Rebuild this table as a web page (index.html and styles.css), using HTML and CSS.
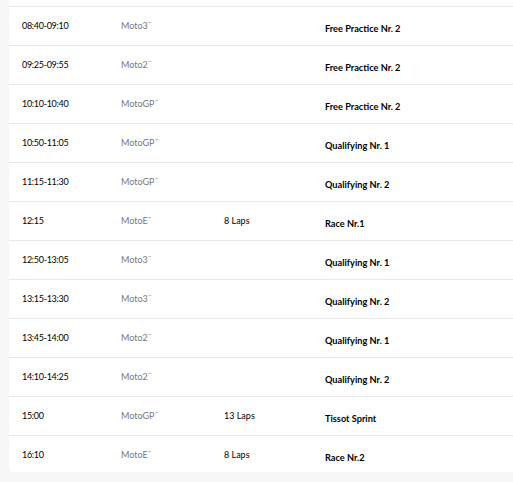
FILE: index.html
```html
<!DOCTYPE html>
<html>
<head>
<meta charset="utf-8">
<link rel="stylesheet" href="styles.css">
</head>
<body>
<div class="card">
  <div class="row"><div class="time">08:40-09:10</div><div class="cls">Moto3<sup>™</sup></div><div class="laps"></div><div class="event">Free Practice Nr. 2</div></div>
  <div class="row"><div class="time">09:25-09:55</div><div class="cls">Moto2<sup>™</sup></div><div class="laps"></div><div class="event">Free Practice Nr. 2</div></div>
  <div class="row"><div class="time">10:10-10:40</div><div class="cls">MotoGP<sup>™</sup></div><div class="laps"></div><div class="event">Free Practice Nr. 2</div></div>
  <div class="row"><div class="time">10:50-11:05</div><div class="cls">MotoGP<sup>™</sup></div><div class="laps"></div><div class="event">Qualifying Nr. 1</div></div>
  <div class="row"><div class="time">11:15-11:30</div><div class="cls">MotoGP<sup>™</sup></div><div class="laps"></div><div class="event">Qualifying Nr. 2</div></div>
  <div class="row"><div class="time">12:15</div><div class="cls">MotoE<sup>™</sup></div><div class="laps">8 Laps</div><div class="event">Race Nr.1</div></div>
  <div class="row"><div class="time">12:50-13:05</div><div class="cls">Moto3<sup>™</sup></div><div class="laps"></div><div class="event">Qualifying Nr. 1</div></div>
  <div class="row"><div class="time">13:15-13:30</div><div class="cls">Moto3<sup>™</sup></div><div class="laps"></div><div class="event">Qualifying Nr. 2</div></div>
  <div class="row"><div class="time">13:45-14:00</div><div class="cls">Moto2<sup>™</sup></div><div class="laps"></div><div class="event">Qualifying Nr. 1</div></div>
  <div class="row"><div class="time">14:10-14:25</div><div class="cls">Moto2<sup>™</sup></div><div class="laps"></div><div class="event">Qualifying Nr. 2</div></div>
  <div class="row"><div class="time">15:00</div><div class="cls">MotoGP<sup>™</sup></div><div class="laps">13 Laps</div><div class="event">Tissot Sprint</div></div>
  <div class="row last"><div class="time">16:10</div><div class="cls">MotoE<sup>™</sup></div><div class="laps">8 Laps</div><div class="event">Race Nr.2</div></div>
</div>
</body>
</html>
```
FILE: styles.css
```css
html, body {
  margin: 0;
  padding: 0;
  background: #f7f7f7;
  overflow: hidden;
  font-family: Lato, "Liberation Sans", sans-serif;
  color: #111;
}
.card {
  margin-left: 9px;
  margin-right: -20px;
  background: #fff;
  padding-top: 6px;
  border-bottom-left-radius: 6px;
}
.row {
  display: grid;
  grid-template-columns: 99px 103px 101px 1fr;
  height: 38px;
  border-top: 1px solid #e8e8e8;
  padding-left: 13px;
  font-size: 9px;
  line-height: 12px;
}
.row.last {
  height: 36px;
}
.time, .cls, .laps {
  padding-top: 13px;
}
.time {
  letter-spacing: -0.3px;
  color: #000;
}
.cls {
  color: #777;
}
.cls sup {
  font-size: 4px;
  vertical-align: top;
  line-height: 8px;
  margin-left: 0.5px;
}
.laps {
  color: #000;
}
.event {
  padding-top: 16px;
  font-weight: 700;
  font-size: 9.2px;
  color: #000;
}
```
